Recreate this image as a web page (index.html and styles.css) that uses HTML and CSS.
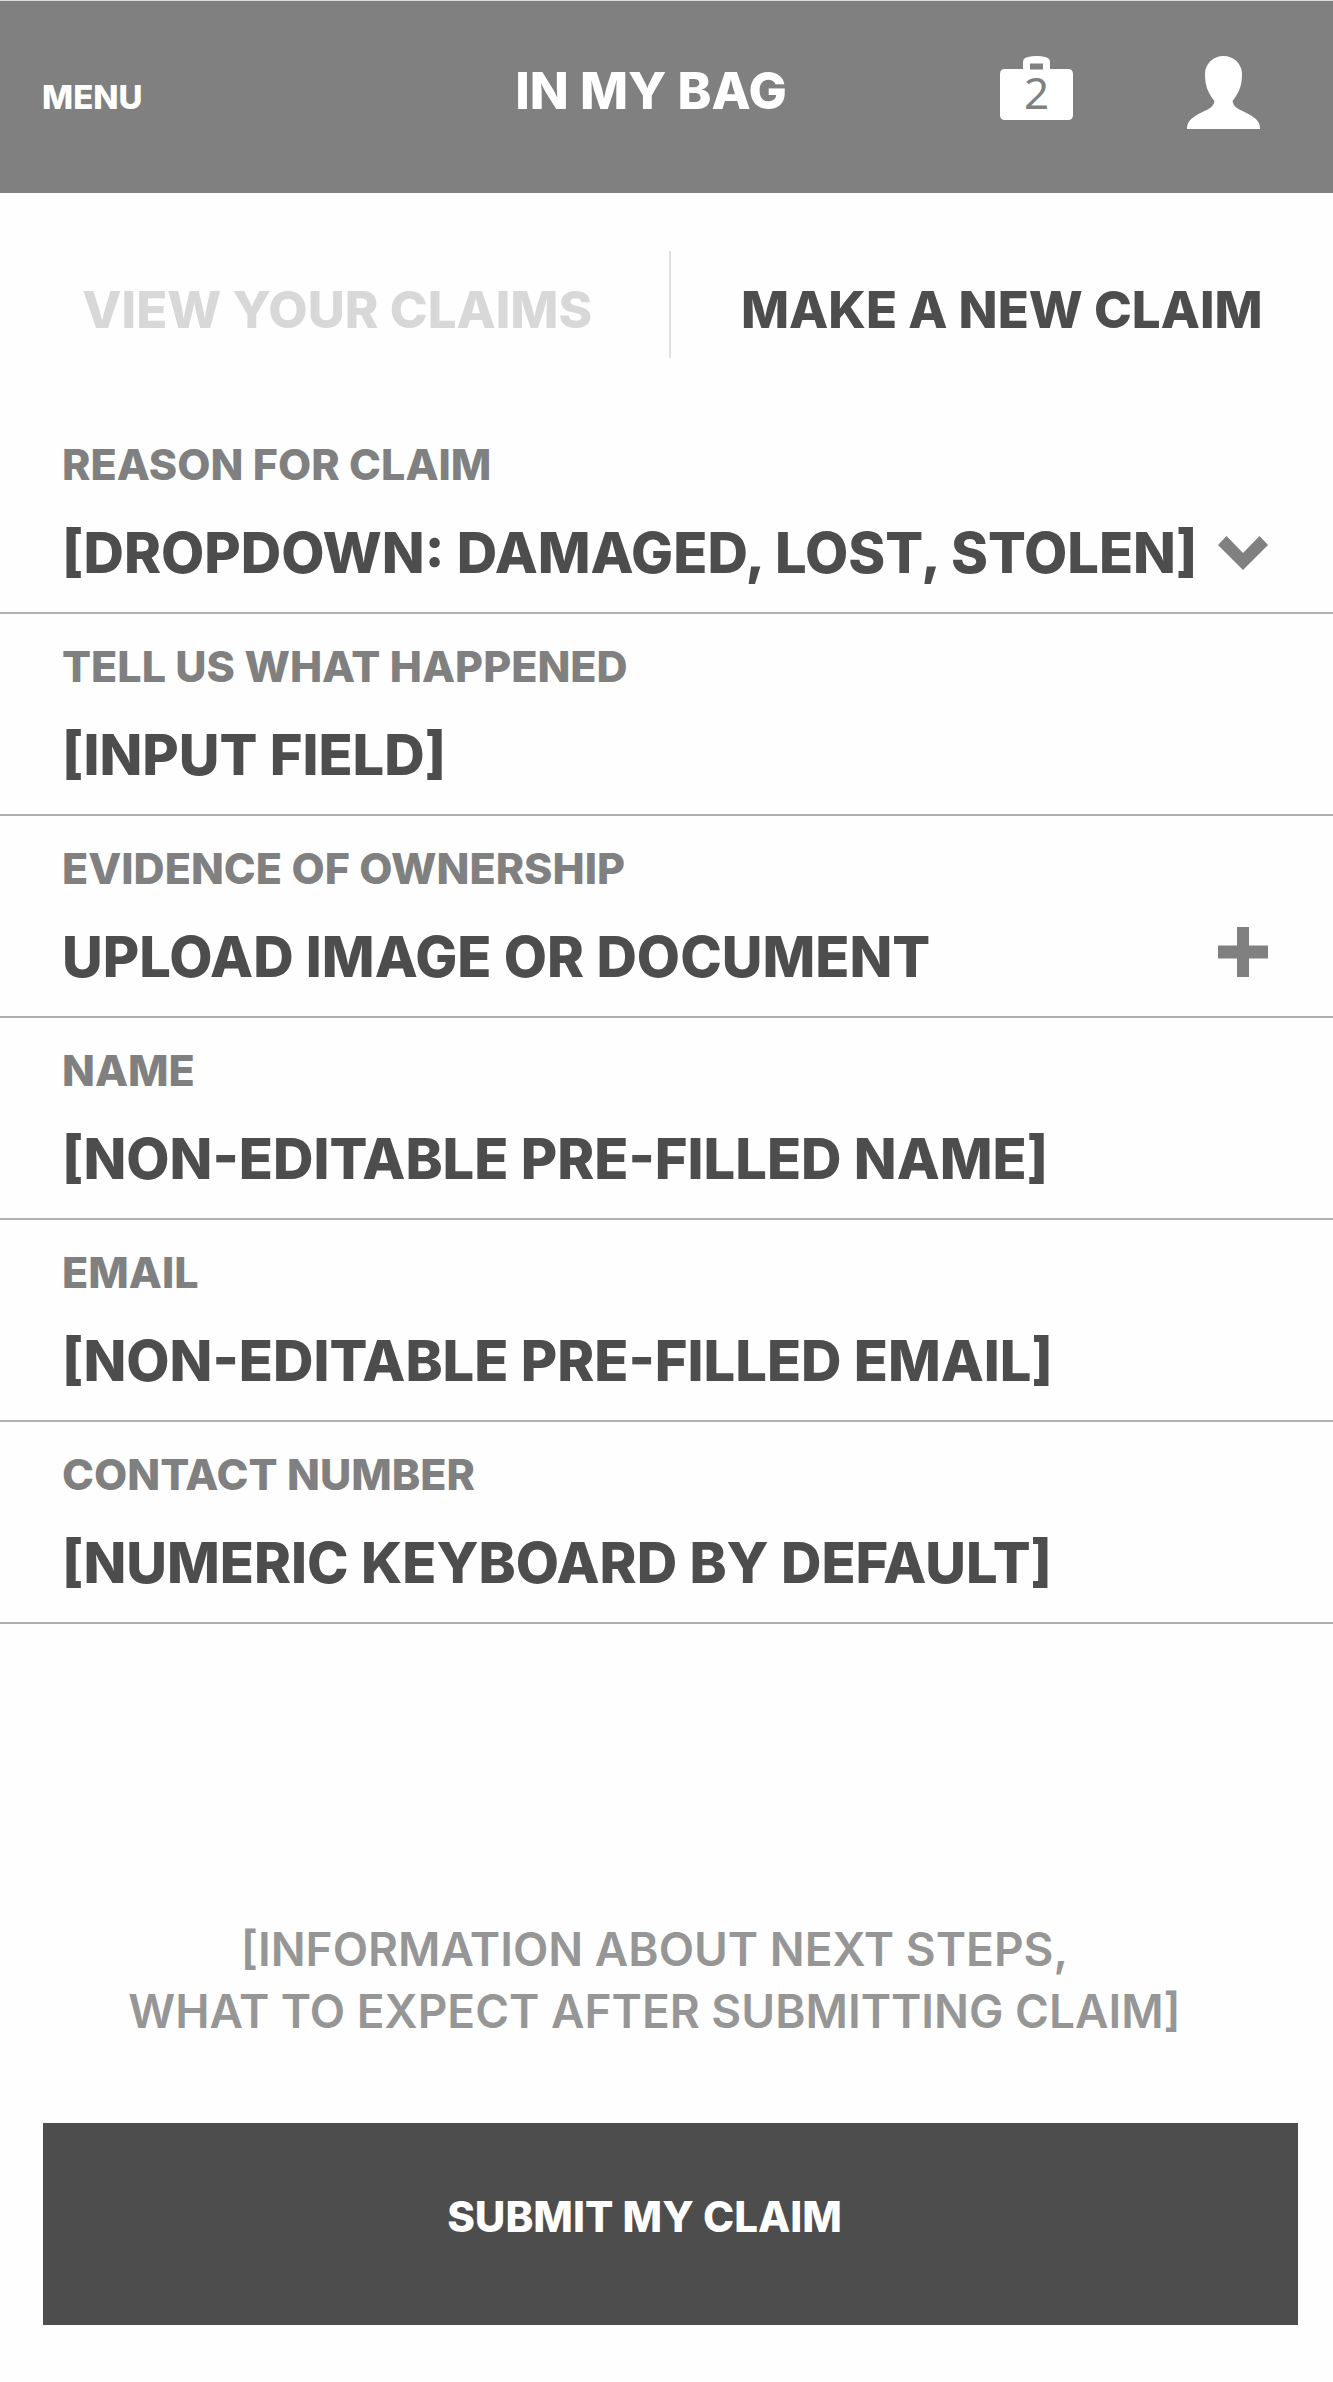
FILE: index.html
```html
<!DOCTYPE html>
<html lang="en">
<head>
<meta charset="utf-8">
<meta name="viewport" content="width=device-width, initial-scale=1">
<title>In My Bag – Make a new claim</title>
<link rel="stylesheet" href="styles.css">
</head>
<body>
<header class="topbar">
  <button class="menu-button" type="button">MENU</button>
  <h1 class="title">IN MY BAG</h1>
  <div class="topbar-actions">
    <a class="bag" href="#bag" aria-label="Bag, 2 items">
      <svg class="icon-bag" viewBox="0 0 73 64" aria-hidden="true">
        <path fill="currentColor" fill-rule="evenodd" d="M5 13H23V6Q23 2.500 27 1.200Q36.500-1 46 1.200Q50 2.500 50 6V13H68Q73 13 73 18V59Q73 64 68 64H5Q0 64 0 59V18Q0 13 5 13ZM30 7.500V13.500H43V7.500Z"/>
      </svg>
      <span class="bag-count">2</span>
    </a>
    <a class="account" href="#account" aria-label="Account">
      <svg class="icon-account" viewBox="0 0 73 73" aria-hidden="true">
        <path fill="currentColor" d="M36.500 0C47 0 55 8 55 18C55 30 52 37 45.500 45C47 54 56 54 64 59.500C70 63.500 73 66 73 73H0C0 66 3 63.500 9 59.500C17 54 26 54 27.500 45C21 37 18 30 18 18C18 8 26 0 36.500 0Z"/>
      </svg>
    </a>
  </div>
</header>

<nav class="tabs">
  <a class="tab" href="#claims">VIEW YOUR CLAIMS</a>
  <span class="tab-divider"></span>
  <a class="tab tab-current" href="#new" aria-current="page">MAKE A NEW CLAIM</a>
</nav>

<form class="claim-form">
  <div class="field">
    <label class="field-label" for="reason">REASON FOR CLAIM</label>
    <div class="select-wrap">
      <select class="field-value" id="reason">
        <option>[DROPDOWN: DAMAGED, LOST, STOLEN]</option>
        <option>DAMAGED</option>
        <option>LOST</option>
        <option>STOLEN</option>
      </select>
      <svg class="icon-chevron" viewBox="0 0 50 34" aria-hidden="true"><path fill="currentColor" d="M0 9L8.500 0L25 17L41.500 0L50 9L25 34Z"/></svg>
    </div>
  </div>
  <div class="field">
    <label class="field-label" for="details">TELL US WHAT HAPPENED</label>
    <input class="field-value" id="details" type="text" value="[INPUT FIELD]">
  </div>
  <div class="field">
    <span class="field-label" id="evidence-label">EVIDENCE OF OWNERSHIP</span>
    <button class="field-value upload" type="button" aria-describedby="evidence-label">
      UPLOAD IMAGE OR DOCUMENT
      <svg class="icon-plus" viewBox="0 0 50 50" aria-hidden="true"><path fill="currentColor" d="M19 0H31V18.500H50V31.500H31V50H19V31.500H0V18.500H19Z"/></svg>
    </button>
  </div>
  <div class="field">
    <label class="field-label" for="name">NAME</label>
    <input class="field-value" id="name" type="text" value="[NON-EDITABLE PRE-FILLED NAME]" readonly>
  </div>
  <div class="field">
    <label class="field-label" for="email">EMAIL</label>
    <input class="field-value" id="email" type="text" value="[NON-EDITABLE PRE-FILLED EMAIL]" readonly>
  </div>
  <div class="field">
    <label class="field-label" for="phone">CONTACT NUMBER</label>
    <input class="field-value" id="phone" type="tel" value="[NUMERIC KEYBOARD BY DEFAULT]">
  </div>

  <div class="form-footer">
    <p class="next-steps">[INFORMATION ABOUT NEXT STEPS,<br>WHAT TO EXPECT AFTER SUBMITTING CLAIM]</p>
    <button class="submit" type="submit">SUBMIT MY CLAIM</button>
  </div>
</form>
</body>
</html>
```
FILE: styles.css
```css
* {
  box-sizing: border-box;
}

body {
  margin: 0;
  background: #fefefe;
  color: #4d4d4d;
  font-family: Inter, "Liberation Sans", sans-serif;
  font-weight: 800;
}

a {
  color: inherit;
  text-decoration: none;
}

svg {
  display: block;
}

button,
input,
select {
  appearance: none;
  margin: 0;
  padding: 0;
  border: 0;
  border-radius: 0;
  background: none;
  color: inherit;
  font: inherit;
}

button,
select {
  cursor: pointer;
}

/* Top bar */

.topbar {
  display: grid;
  grid-template-columns: 1fr auto 1fr;
  align-items: baseline;
  padding: 55px 73px 64px 42px;
  border-top: 1px solid #dedede;
  background: #808080;
  color: #fff;
}

.menu-button {
  justify-self: start;
  font-size: 33px;
  line-height: 48px;
}

.title {
  margin: 0;
  font-size: 51px;
  font-weight: 800;
  line-height: 70px;
}

.topbar-actions {
  display: flex;
  align-self: start;
  align-items: flex-start;
  justify-content: flex-end;
  gap: 114px;
}

.bag {
  display: grid;
}

.bag > * {
  grid-area: 1 / 1;
}

.icon-bag {
  width: 73px;
  height: 64px;
}

.bag-count {
  align-self: end;
  justify-self: center;
  color: #808080;
  font-family: "Noto Sans", sans-serif;
  font-size: 44px;
  font-weight: 400;
  line-height: 56px;
}

.icon-account {
  width: 73px;
  height: 73px;
}

/* Tabs */

.tabs {
  display: grid;
  grid-template-columns: 1fr 2px 1fr;
  align-items: end;
  padding: 58px 0 54px 6px;
}

.tab {
  color: #d8d8d8;
  font-size: 51px;
  line-height: 96px;
  text-align: center;
}

.tab-current {
  color: #4d4d4d;
}

.tab-divider {
  height: 107px;
  background: #e0e0e0;
}

/* Claim form */

.field {
  display: flex;
  flex-direction: column;
  gap: 33px;
  padding: 28px 65px 27px 62px;
  border-bottom: 2px solid #b0b0b0;
}

.field-label {
  color: #808080;
  font-size: 43px;
  line-height: 48px;
}

.field-value {
  width: 100%;
  height: 64px;
  font-size: 56px;
  line-height: 64px;
}

.select-wrap {
  display: grid;
  align-items: center;
}

.select-wrap > * {
  grid-area: 1 / 1;
}

.icon-chevron {
  justify-self: end;
  width: 50px;
  height: 34px;
  color: #808080;
  pointer-events: none;
}

.upload {
  display: flex;
  align-items: center;
  justify-content: space-between;
  text-align: left;
}

.icon-plus {
  width: 50px;
  height: 50px;
  margin-bottom: 10px;
  color: #808080;
}

/* Footer */

.form-footer {
  display: flex;
  flex-direction: column;
  gap: 81px;
  padding: 294px 35px 57px 43px;
}

.next-steps {
  margin: 0;
  padding-right: 32px;
  color: #969696;
  font-size: 46px;
  font-weight: 600;
  line-height: 62px;
  text-align: center;
}

.submit {
  padding: 64px 52px 78px 0;
  background: #4d4d4d;
  color: #fff;
  font-size: 42px;
  line-height: 60px;
}
```
